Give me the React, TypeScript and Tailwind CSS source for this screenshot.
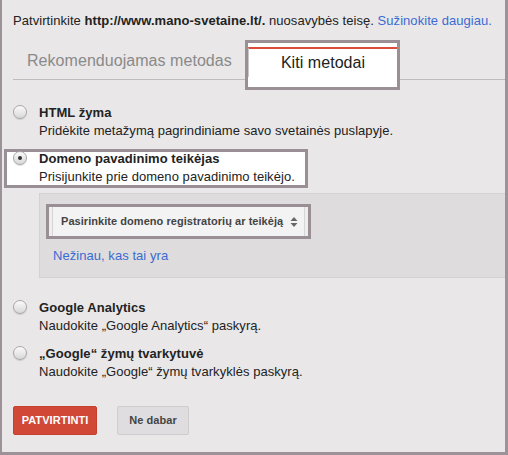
function Radio({ checked = false }: { checked?: boolean }) {
  return (
    <span className="mt-[1px] flex h-[14px] w-[14px] shrink-0 items-center justify-center rounded-full border border-[#a9a7a8] bg-gradient-to-b from-[#fbfbfb] to-[#d9d8d9] shadow-[0_1px_1px_rgba(0,0,0,0.12)]">
      {checked && <span className="h-[4px] w-[4px] rounded-full bg-[#333]" />}
    </span>
  )
}

function Option({ label, desc, checked }: { label: string; desc: string; checked?: boolean }) {
  return (
    <div className="flex gap-[12px]">
      <Radio checked={checked} />
      <div>
        <div className="h-[18px] font-bold leading-[18px]">{label}</div>
        <div className="h-[18px] leading-[18px]">{desc}</div>
      </div>
    </div>
  )
}

export default function App() {
  return (
    <div className="h-[455px] w-[508px] overflow-hidden border-b-[3px] border-l-2 border-r-[3px] border-[#9c9297] bg-[#e9e7e8] font-['Liberation_Sans',Arial,sans-serif] text-[13px] tracking-[0.05px] text-[#222]">
      {/* Intro */}
      <div className="pl-[11px] pt-[12px] leading-[18px]">
        Patvirtinkite <b>http://www.mano-svetaine.lt/.</b> nuosavybės teisę.{' '}
        <span className="text-[#3b6bd2]">Sužinokite daugiau.</span>
      </div>

      {/* Tabs */}
      <div className="ml-[11px] mt-[10px] flex items-end border-b border-[#bdbbbc]">
        <div className="flex h-[36px] w-[232px] items-center pl-[14px] text-[16px] text-[#8a8a8a]">
          Rekomenduojamas metodas
        </div>
        <div className="-mb-[11px] h-[50px] w-[155px] border-[3px] border-[#9a8f95] bg-white pt-[4px]">
          <div className="flex h-[30px] items-center justify-center border-l border-t-2 border-l-[#c8c8c8] border-t-[#dd4b39] text-[16px] text-[#222]">
            Kiti metodai
          </div>
        </div>
      </div>

      {/* Methods */}
      <div className="mt-[24px] pl-[11px]">
        <Option label="HTML žyma" desc="Pridėkite metažymą pagrindiniame savo svetainės puslapyje." />
      </div>

      <div className="ml-[2px] mt-[9px] h-[39px] w-[304px] border-[3px] border-[#9a8f95] bg-white pl-[6px]">
        <div className="-mt-[2px]">
          <Option
            checked
            label="Domeno pavadinimo teikėjas"
            desc="Prisijunkite prie domeno pavadinimo teikėjo."
          />
        </div>
      </div>

      <div className="ml-[37px] mt-[5px] border border-r-0 border-[#d3d1d2] bg-[#dedcdd] pb-[12px] pt-[10px]">
        <div className="ml-[6px] h-[35px] w-[265px] border-[3px] border-[#9a8f95] bg-[#eeeeee] px-[3px]">
          <div className="flex h-full items-center justify-between border-x border-[#d6d6d6] bg-[#f3f3f3] pl-[8px] pr-[6px] text-[11px] font-bold text-[#444]">
            <span>Pasirinkite domeno registratorių ar teikėją</span>
            <svg width="8" height="12" viewBox="0 0 8 12" className="fill-[#666]">
              <path d="M4 1 L7.5 5 H0.5 Z" />
              <path d="M4 11 L7.5 7 H0.5 Z" />
            </svg>
          </div>
        </div>
        <div className="mt-[8px] pl-[13px] leading-[18px] text-[#3b6bd2]">Nežinau, kas tai yra</div>
      </div>

      <div className="mt-[21px] flex flex-col gap-[10px] pl-[11px]">
        <Option label="Google Analytics" desc="Naudokite „Google Analytics“ paskyrą." />
        <Option label="„Google“ žymų tvarkytuvė" desc="Naudokite „Google“ žymų tvarkyklės paskyrą." />
      </div>

      {/* Actions */}
      <div className="mt-[25px] flex gap-[20px] pl-[11px]">
        <button className="h-[29px] w-[84px] rounded-[2px] border border-[#c6402f] bg-[#d14836] text-[11px] font-bold text-white">
          PATVIRTINTI
        </button>
        <button className="h-[29px] w-[72px] rounded-[2px] border border-[#cfcdce] bg-[#dfdddf] text-[11px] font-bold text-[#444]">
          Ne dabar
        </button>
      </div>
    </div>
  )
}
